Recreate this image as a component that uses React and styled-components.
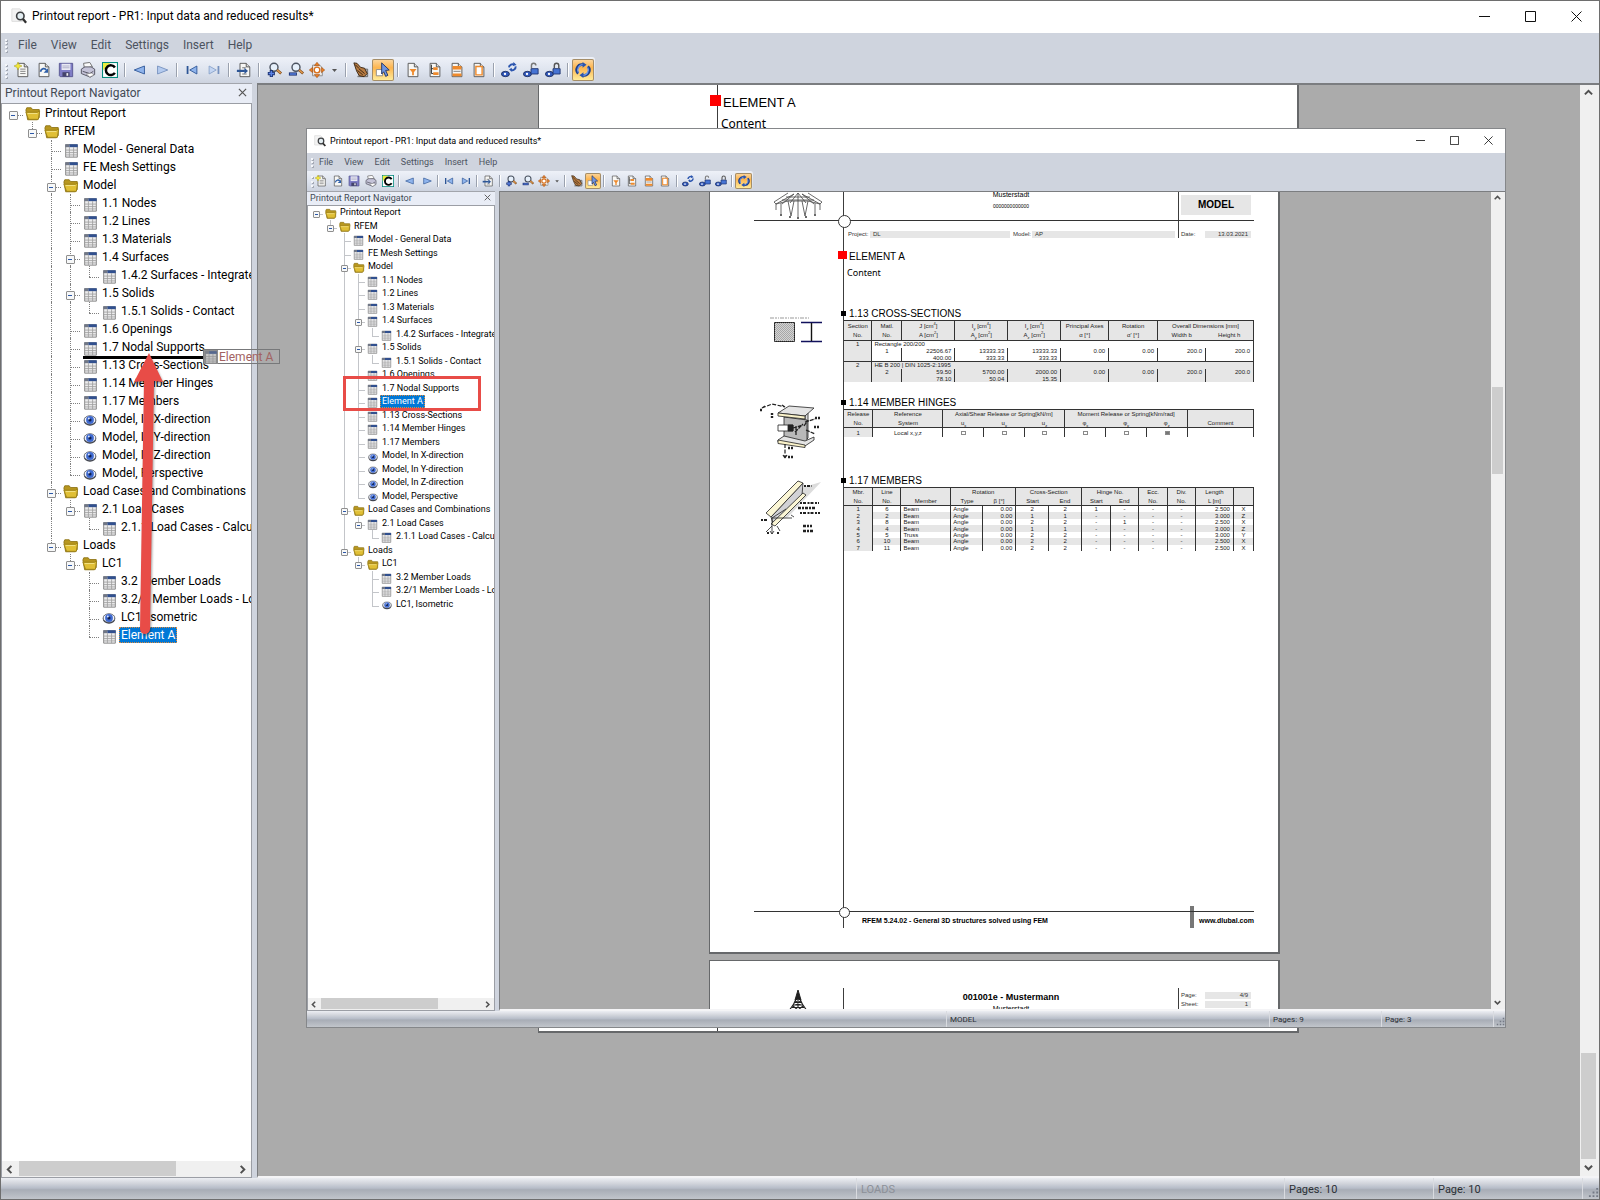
import React from "react";
import styled, { createGlobalStyle, css, ThemeProvider, useTheme } from "styled-components";

/* ---------- themes: the full window and the compact one ---------- */

const full = {
  compact: false, font: 12, status: 11, title: 32, titlePad: 10, titleGap: 5, titleIcon: 16, caption: 46,
  menu: 24, menuGap: 14, menuPad: 18, tools: 26, toolsWidth: 594, toolIcon: 18, trayPad: 11,
  head: 20, nav: 256, splitter: 5, tree: 540, indent: 19, mid: 9, treePad: 2, slot: 20, mark: 9, glyph: 16,
  bar: 17, foot: 21, footCells: [428, 149, 149, 17], sheet: 761, rim: 2,
};
const compact = {
  compact: true, font: 9, status: 8, title: 24, titlePad: 7, titleGap: 4, titleIcon: 12, caption: 34,
  menu: 18, menuGap: 11, menuPad: 13, tools: 20, toolsWidth: 446, toolIcon: 14, trayPad: 7,
  head: 14, nav: 192, splitter: 4, tree: 405, indent: 14, mid: 7, treePad: 1, slot: 15, mark: 7, glyph: 12,
  bar: 13, foot: 16, footCells: [323, 112, 112, 12], sheet: 571, rim: 1,
};

const Global = createGlobalStyle`
  * { box-sizing: border-box; }
  body { margin: 0; background: #ababab; font-family: Roboto, "Noto Sans", sans-serif; }
  button { margin: 0; padding: 0; border: 0; background: none; font: inherit; color: inherit; }
  svg { display: block; flex: none; }
`;

/* ---------- window frame ---------- */

const Frame = styled.section`
  display: flex;
  flex-direction: column;
  height: 100%;
  border: 1px solid ${(p) => (p.theme.compact ? "#85878a" : "#6e6e6e")};
  background: #cfd4de;
  color: #000;
  font-size: ${(p) => p.theme.font}px;
  overflow: hidden;
`;
const TitleBar = styled.header`
  display: flex;
  align-items: center;
  flex: none;
  height: ${(p) => p.theme.title}px;
  padding: 0 0 ${(p) => p.theme.rim}px ${(p) => p.theme.titlePad}px;
  background: #fff;
`;
const Title = styled.h1`
  flex: 1;
  margin: 0;
  padding-left: ${(p) => p.theme.titleGap}px;
  font-size: inherit;
  font-weight: 400;
`;
const CaptionButton = styled.button`
  display: flex;
  justify-content: center;
  width: ${(p) => p.theme.caption}px;
`;
const grip = css`
  &::before {
    content: "";
    position: absolute;
    left: 4px;
    top: 25%;
    bottom: 20%;
    border-left: 2px dotted #f4f6fa;
    filter: drop-shadow(1px 1px 0 #a4a9b4);
  }
`;
const MenuBar = styled.nav`
  display: flex;
  align-items: center;
  gap: ${(p) => p.theme.menuGap}px;
  flex: none;
  position: relative;
  height: ${(p) => p.theme.menu}px;
  padding-left: ${(p) => p.theme.menuPad - 1}px;
  color: #4c535e;
  ${grip}
`;
const ToolRow = styled.div`
  flex: none;
  height: ${(p) => p.theme.tools}px;
`;
const Tray = styled.div`
  position: relative;
  display: flex;
  align-items: center;
  width: ${(p) => p.theme.toolsWidth}px;
  height: 100%;
  padding: 0 1px 0 ${(p) => p.theme.trayPad - 1}px;
  border-radius: 0 3px 3px 0;
  background: linear-gradient(#eef1f8, #dde3ee 55%, #cdd3df);
  ${grip}
`;
const Tool = styled.button`
  display: flex;
  align-items: center;
  justify-content: center;
  gap: 1px;
  flex: ${(p) => (p.$wide ? 35 : 22)} 1 0;
  min-width: 0;
  height: calc(100% - 4px);
  border-radius: 2px;
  ${(p) => p.$on && css`
    background: linear-gradient(#fcd9a4, #fdb54f 40%, #fff0a0);
    box-shadow: inset 0 0 0 1px #a48d68;
  `}
`;
const ToolSeparator = styled.span`
  flex: 8 1 0;
  height: 56%;
  background: linear-gradient(90deg, #9aa1ae 1px, #fff 1px 2px, transparent 2px) 50% 0 / 2px 100% no-repeat;
`;
const Workspace = styled.div`
  display: flex;
  flex: 1;
  min-height: 0;
`;

/* ---------- navigator ---------- */

const Navigator = styled.aside`
  display: flex;
  flex-direction: column;
  flex: none;
  width: ${(p) => p.theme.nav}px;
  padding-right: ${(p) => p.theme.splitter}px;
`;
const PanelHead = styled.div`
  display: flex;
  align-items: center;
  justify-content: space-between;
  flex: none;
  height: ${(p) => p.theme.head}px;
  padding: 0 ${(p) => (p.theme.compact ? 4 : 5)}px 2px ${(p) => (p.theme.compact ? 3 : 4)}px;
  border-top: 1px solid #a2a5ac;
  background: #e9edf6;
  color: #434a55;
`;
const PanelTitle = styled.h2`
  margin: 0;
  font-size: inherit;
  font-weight: 400;
`;
const TreeBox = styled.div`
  display: flex;
  flex-direction: column;
  justify-content: space-between;
  flex: 1;
  min-height: 0;
  border: 1px solid #9b9ea5;
  background: #fff;
`;
const Tree = styled.div`
  display: grid;
  grid-auto-rows: minmax(0, 1fr);
  height: ${(p) => p.theme.tree}px;
  padding-left: ${(p) => p.theme.treePad}px;
  overflow: hidden;
`;
const TreeRow = styled.div`
  display: flex;
  align-items: stretch;
  white-space: nowrap;
`;
const lineStyle = (p) => (p.theme.compact ? "1px solid #c3c5c9" : "1px dotted #808080");
const Guide = styled.span`
  position: relative;
  flex: none;
  width: ${(p) => p.theme.indent}px;
  &::before {
    content: "";
    position: absolute;
    left: ${(p) => p.theme.mid}px;
    top: 0;
    bottom: ${(p) => (p.$stop ? "38%" : "0")};
    border-left: ${(p) => (p.$line ? lineStyle(p) : "0")};
  }
  &::after {
    content: "";
    position: absolute;
    left: ${(p) => p.theme.mid}px;
    right: 0;
    top: 61%;
    border-top: ${(p) => (p.$elbow ? lineStyle(p) : "0")};
  }
`;
const Expander = styled.button`
  position: absolute;
  z-index: 1;
  left: ${(p) => p.theme.mid}px;
  top: 61%;
  width: ${(p) => p.theme.mark}px;
  height: ${(p) => p.theme.mark}px;
  margin: ${(p) => -(p.theme.mark - 1) / 2}px;
  border: 1px solid #8f8f8f;
  border-radius: 1px;
  background: linear-gradient(#2c58a8, #2c58a8) 50% 50% / 60% 1px no-repeat, #f7f8f8;
`;
const Slot = styled.span`
  display: flex;
  align-items: center;
  justify-content: center;
  flex: none;
  width: ${(p) => p.theme.slot}px;
  padding-top: 2px;
`;
const Label = styled.span`
  align-self: center;
  padding: 0 2px;
  line-height: ${(p) => (p.theme.compact ? 13 : 16)}px;
  ${(p) => p.$selected && css`
    background: #0078d7;
    color: #fff;
    outline: 1px dotted #e08a3c;
    outline-offset: -1px;
  `}
`;

/* ---------- scroll bars ---------- */

const HBar = styled.div`
  display: flex;
  flex: none;
  height: ${(p) => p.theme.bar - 1}px;
  background: #f0f0f0;
`;
const VBar = styled.div`
  display: flex;
  flex-direction: column;
  flex: none;
  width: ${(p) => p.theme.bar}px;
  background: #f0f0f0;
`;
const Arrow = styled.button`
  display: flex;
  align-items: center;
  justify-content: center;
  flex: none;
  width: ${(p) => p.theme.bar}px;
  height: ${(p) => (p.$v ? p.theme.bar : p.theme.bar - 1)}px;
`;
const Track = styled.div`
  display: flex;
  flex-direction: ${(p) => (p.$v ? "column" : "row")};
  flex: 1;
  padding: ${(p) => (p.$v ? "0 1px" : "0 0 1px")};
`;
const Gap = styled.span`flex: ${(p) => p.$grow} 1 0;`;
const Thumb = styled.span`
  flex: ${(p) => p.$grow} 1 0;
  background: #cdcdcd;
`;

/* ---------- preview area and status bar ---------- */

const Preview = styled.main`
  display: flex;
  flex: 1;
  min-width: 0;
  border: solid #7b7d80;
  border-width: ${(p) => p.theme.rim}px 0 0 1px;
  border-bottom: 2px solid #f4f4f6;
  padding-right: ${(p) => p.theme.rim}px;
  background: #f0f0f0;
`;
const Desk = styled.div`
  display: flex;
  flex-direction: column;
  align-items: center;
  gap: 6px;
  flex: 1;
  min-width: 0;
  padding-right: ${(p) => (p.theme.compact ? 2 : 1)}px;
  overflow: hidden;
  background: #ababab;
`;
const StatusBar = styled.footer`
  display: flex;
  align-items: stretch;
  flex: none;
  height: ${(p) => p.theme.foot}px;
  font-size: ${(p) => p.theme.status}px;
  color: #2c3036;
  background: linear-gradient(#eceef3, #d2d5dc 25%, #b7bdc9 48%, #a8adb6 56%, #c1c5cb);
`;
const StatusCell = styled.span`
  display: flex;
  align-items: center;
  width: ${(p) => p.$w}px;
  flex: ${(p) => (p.$w ? "none" : 1)};
  padding: ${(p) => p.theme.rim}px 0 0 ${(p) => (p.theme.compact ? 3 : 4)}px;
  border-left: 1px solid ${(p) => (p.$first ? "transparent" : "#d9dbe0")};
  color: ${(p) => (p.$dim ? "#8c9098" : "inherit")};
`;
const GripCell = styled(StatusCell)`
  align-items: flex-end;
  justify-content: flex-end;
  padding: 0 0 1px;
`;

/* ---------- report sheets ---------- */

const Sheet = styled.article`
  display: flex;
  flex-direction: column;
  flex: none;
  width: ${(p) => p.theme.sheet}px;
  height: ${(p) => p.$h}px;
  border: solid #66686a;
  border-width: ${(p) => (p.$top ? 1 : 0)}px 2px 2px 1px;
  padding-top: ${(p) => (p.$top ? 27 : 0)}px;
  background: #fff;
  font-family: "Liberation Sans", Arial, sans-serif;
`;
const Band = styled.div`
  display: grid;
  grid-template-columns: ${(p) => (p.theme.compact ? 133 : 178)}px 1fr;
  flex: ${(p) => (p.$fill ? 1 : "none")};
  min-height: ${(p) => p.$h || 0}px;
`;
const Margin = styled.div`
  display: flex;
  align-items: flex-start;
  justify-content: flex-end;
  padding: ${(p) => p.$pad || 0}px ${(p) => p.$right || 19}px 0 0;
`;
const Column = styled.div`
  border-left: 1px solid #3c3c3c;
  padding-right: 24px;
  padding-bottom: ${(p) => p.$gap || 0}px;
`;
const Heading = styled.h3`
  position: relative;
  margin: ${(p) => p.$top || 0}px 0 0;
  padding-left: 5px;
  font-size: ${(p) => (p.theme.compact ? 10 : 13)}px;
  line-height: ${(p) => (p.theme.compact ? 12 : 16)}px;
  font-weight: 400;
  white-space: nowrap;
  &::before {
    content: "";
    position: absolute;
    left: ${(p) => (p.$red ? (p.theme.compact ? -6 : -8) : -3)}px;
    top: ${(p) => (p.$red ? 0 : 3)}px;
    width: ${(p) => (p.$red ? (p.theme.compact ? 9 : 11) : 5)}px;
    height: ${(p) => (p.$red ? (p.theme.compact ? 8 : 11) : 5)}px;
    background: ${(p) => (p.$red ? "#f00" : "#000")};
  }
`;
const Content = styled.p`
  margin: ${(p) => (p.theme.compact ? 4 : 5)}px 0 0;
  padding-left: 3px;
  font-family: "Noto Sans", sans-serif;
  font-size: ${(p) => (p.theme.compact ? 9 : 12)}px;
  line-height: ${(p) => (p.theme.compact ? 12 : 16)}px;
`;
const HeadColumn = styled.div`
  display: grid;
  grid-template-columns: 1fr 76px;
  border-left: 1px solid #3c3c3c;
  padding-right: 24px;
`;
const Owner = styled.div`
  text-align: center;
  font-size: ${(p) => (p.$small ? 5 : 7)}px;
  line-height: ${(p) => (p.$small ? 18 : 5)}px;
`;
const OwnerName = styled.div`
  text-align: center;
  font-size: 9px;
  font-weight: 700;
  line-height: 18px;
`;
const HeadSide = styled.div`
  display: flex;
  flex-direction: column;
  gap: ${(p) => p.$gap}px;
  border-left: 1px solid #3c3c3c;
  padding: ${(p) => p.$pad || 0}px 3px 0 2px;
`;
const Part = styled.div`
  padding: 4px 0;
  background: #e6e6e6;
  font-size: 10px;
  font-weight: 700;
  line-height: 12px;
  text-align: center;
`;
const Field = styled.div`
  display: flex;
  align-items: center;
  flex: ${(p) => p.$grow || "none"};
  height: 7px;
  font-size: 6px;
  line-height: 7px;
  color: #333;
`;
const FieldName = styled.span`width: ${(p) => p.$w}px;`;
const FieldValue = styled.span`
  flex: 1;
  padding: 0 3px;
  background: #e6e6e6;
  text-align: ${(p) => (p.$right ? "right" : "left")};
`;
const FieldRow = styled.div`
  display: flex;
  gap: 3px;
  padding: 10px 3px 0 4px;
`;
const Rule = styled.div`
  position: relative;
  z-index: 1;
  flex: none;
  height: 1px;
  margin: 0 24px 0 44px;
  background: #333;
  &::before {
    content: "";
    position: absolute;
    left: ${(p) => 89 - p.$r}px;
    top: ${(p) => -p.$r}px;
    width: ${(p) => 2 * p.$r + 1}px;
    height: ${(p) => 2 * p.$r + 1}px;
    border: 1px solid #333;
    border-radius: 50%;
    background: #fff;
  }
`;
const Imprint = styled.div`
  position: relative;
  display: flex;
  align-items: center;
  justify-content: space-between;
  height: 16px;
  margin: 0 24px 24px 0;
  padding-left: 18px;
  border-left: 1px solid #3c3c3c;
  font-size: 7px;
  font-weight: 700;
  &::after {
    content: "";
    position: absolute;
    right: 60px;
    top: -6px;
    width: 4px;
    height: 22px;
    background: #777;
  }
`;

const Grid = styled.table`
  table-layout: fixed;
  width: 100%;
  height: ${(p) => p.$h}px;
  border-collapse: collapse;
  border-right: 1px solid #333;
  font-size: 6px;
  line-height: 6px;
  color: #222;
  th { font-weight: 400; background: #e6e6e6; padding: 0; white-space: nowrap; border-left: 1px solid #333; }
  th:first-child, td:first-child { border-left: 0; }
  td { padding: 0 3px; border-left: 1px solid #333; white-space: nowrap; text-align: center; }
  tr > td:first-child { background: #e6e6e6; }
  thead { border-top: 1px solid #333; border-bottom: 1px solid #333; }
  thead tr { height: ${(p) => p.$head}px; }
  sub, sup { font-size: 4px; line-height: 0; }
`;
const Row = styled.tr`
  background: ${(p) => (p.$alt ? "#e6e6e6" : "#fff")};
  border-top: ${(p) => (p.$rule ? "1px solid #333" : "0")};
`;
const Th = styled.th`&&& { ${(p) => p.$open && "border-left: 0;"} }`;
const Num = styled.td`&&& { text-align: right; }`;
const Txt = styled.td`&&& { text-align: left; padding-left: 2px; }`;
const Tick = styled.input`
  appearance: none;
  display: block;
  width: 5px;
  height: 4px;
  margin: 0 auto;
  border: 1px solid #8a8a8a;
  background: #fff;
  &:checked { background: #777; }
`;

/* ---------- overlays ---------- */

const Stage = styled.div`
  position: relative;
  height: 100vh;
  overflow: hidden;
`;
const Floating = styled.div`
  position: absolute;
  left: 306px;
  top: 128px;
  width: 1200px;
  height: 900px;
`;
const Callout = styled.div`
  position: absolute;
  left: 343px;
  top: 376px;
  width: 138px;
  height: 35px;
  border: 3px solid #e84c47;
`;
const DropLine = styled.div`
  position: absolute;
  left: 83px;
  top: 356px;
  width: 122px;
  height: 3px;
  background: #000;
`;
const Ghost = styled.div`
  position: absolute;
  left: 203px;
  top: 349px;
  display: flex;
  align-items: center;
  gap: 1px;
  width: 77px;
  height: 15px;
  border: 1px solid #77787a;
  font-size: 12px;
  color: #a26262;
`;
const GhostIcon = styled.span`
  background: #8e8e8e;
  span { display: block; opacity: 0.6; }
`;
const DragArrow = styled.svg`
  position: absolute;
  left: 130px;
  top: 350px;
  filter: drop-shadow(1px 2px 1px rgba(0, 0, 0, 0.35));
`;

/* ---------- drawings ---------- */

const Ic = ({ s, children, ...r }) => (
  <svg width={s} height={s} viewBox="0 0 18 18" fill="none" aria-hidden="true" {...r}>{children}</svg>
);
const Paper = ({ x = 0 }) => (
  <g>
    <path d={`M${3.5 + x} 1.5h7l4 4v11h-11z`} fill="#f7f7f5" stroke="#4f4f4f" />
    <path d={`M${10.5 + x} 1.5v4h4`} fill="#ddd" stroke="#4f4f4f" />
  </g>
);
const Lens = () => (
  <g>
    <circle cx="9" cy="6" r="4.5" fill="#e6f0fb" stroke="#4b5360" strokeWidth="1.6" />
    <path d="M12.5 9l4.500 4" stroke="#7a4a1c" strokeWidth="3" />
    <path d="M12.500 9l4 3.500" stroke="#e39a4e" strokeWidth="1.600" />
  </g>
);
const BlueEye = () => (
  <g>
    <ellipse cx="5" cy="13.500" rx="4.500" ry="3" fill="#3159bd" stroke="#1b2c5c" />
    <circle cx="4.500" cy="13.500" r="1.300" fill="#fff" />
  </g>
);
const drawings = {
  report: <><path d="M1 1h9l3 3v11H1z" fill="#f3f3f3" stroke="#dadada" /><circle cx="10.500" cy="9" r="4.200" fill="#e4eef2" stroke="#3d3f42" strokeWidth="1.800" /><path d="M13.500 12.500L17 16.500" stroke="#2f2f2f" strokeWidth="2.600" /></>,
  new: <><Paper x={1} /><path d="M7 8h6M7 10.500h6M7 13h6" stroke="#777" /><path d="M4.500 0l1.200 3L9 4.500 5.800 6 4.500 9 3.300 6 0 4.500 3.300 3z" fill="#f5e93a" stroke="#a39a1d" strokeWidth=".6" /></>,
  open: <><Paper /><path d="M5 11c1-4 5-4.500 6.500-2" stroke="#2f5fa8" strokeWidth="2" /><path d="M13.500 7v5h-5z" fill="#2f5fa8" /></>,
  save: <><path d="M1.500 1.500h15v15h-14l-1-1z" fill="#7f7dc6" stroke="#55548e" /><path d="M4 2h10v7H4z" fill="#e9e9f4" /><path d="M5 4.500h8M5 6.500h8" stroke="#a9a9c4" /><path d="M5 11.500h8v5H5z" fill="#43436b" /><path d="M9.500 12.500h2v3h-2z" fill="#eee" /></>,
  print: <><path d="M5 7L4 1.500l7-1 3 5z" fill="#fafafa" stroke="#666" /><path d="M1.500 8l4-2.500h7L16.500 8v6l-5 3-10-4z" fill="#c4c3d8" stroke="#4b4b58" /><path d="M3 10.500l8 2.500 4-2.500" stroke="#4b4b58" /><path d="M7 13.500l6-1 3 2-5 2.500z" fill="#fff" stroke="#777" strokeWidth=".7" /></>,
  company: <><path d="M0 0h18v18H0z" fill="#068b7e" /><path d="M1.200 1.200h15.600v15.600H1.200z" fill="#fff" /><path d="M1.200 1.200h8l-8 8z" fill="#e9ee3d" /><path d="M14.500 6.200A5.500 5.500 0 1 0 14.500 12.300" stroke="#000" strokeWidth="2.800" /></>,
  prev: <path d="M2.500 9L14 4.500v9z" fill="#8fb4ec" stroke="#2c5596" />,
  next: <path d="M15.500 9L4 4.500v9z" fill="#b4cbef" stroke="#7590bd" />,
  nextStrong: <path d="M15.500 9L4 4.500v9z" fill="#8fb4ec" stroke="#2c5596" />,
  first: <><path d="M4 4.500v9" stroke="#2c5596" strokeWidth="2" /><path d="M6.500 9L14.500 4.500v9z" fill="#8fb4ec" stroke="#2c5596" /></>,
  last: <><path d="M14 4.500v9" stroke="#7590bd" strokeWidth="2" /><path d="M11.500 9L3.500 4.500v9z" fill="#c3d5f2" stroke="#8aa2ca" /></>,
  lastStrong: <><path d="M14 4.500v9" stroke="#2c5596" strokeWidth="2" /><path d="M11.500 9L3.500 4.500v9z" fill="#8fb4ec" stroke="#2c5596" /></>,
  goto: <><Paper x={1} /><path d="M7 6.500h4M7 13.500h5" stroke="#666" /><path d="M1 10h9" stroke="#2c5596" strokeWidth="2.500" /><path d="M9.500 6.500L13.500 10l-4 3.500z" fill="#2c5596" /></>,
  zoomIn: <><Lens /><path d="M6 9v8M2 13h8" stroke="#1b3170" strokeWidth="3.600" /><path d="M6 10v6M3 13h6" stroke="#5b83e6" strokeWidth="1.600" /></>,
  zoomOut: <><Lens /><path d="M1 13.500h9" stroke="#1b3170" strokeWidth="3.600" /><path d="M2 13.500h7" stroke="#5b83e6" strokeWidth="1.600" /></>,
  fit: <><path d="M4 3.500h8l3 3v9H4z" fill="#ececec" stroke="#888" /><path d="M9 .3l3 3.700H6zM9 17.700l3-3.700H6zM.3 9L4 6v6zM17.700 9L14 6v6z" fill="#ea7d22" stroke="#9a4a0c" strokeWidth=".6" /><circle cx="9" cy="9" r="3.200" fill="#fff" stroke="#d9701b" strokeWidth="1.600" /></>,
  hand: <><path d="M8 8h8.500v8.500H5" fill="#b5b5b5" stroke="#666" /><path d="M1 1l3.500.5 4 4.500 4.500 1 3 6-3.500 3.500-5.500-1-3-5.500z" fill="#b87c42" stroke="#33210f" /><path d="M5 9.500l6 5M6.500 7.500l6.500 5.500M2.500 3l4 4" stroke="#33210f" /></>,
  pick: <><path d="M1.500 8.500h7v7h-7z" fill="#fff" stroke="#888" /><path d="M7.500 1l8.500 8-4 .5 2.500 5.500-2.500 1.200L9.800 11 7.500 13.500z" fill="#6f95e0" stroke="#1f3160" /></>,
  filter: <><Paper /><path d="M5 8h8l-3 3.500V15H8v-3.500z" fill="#ef8a2c" /></>,
  structure: <><Paper /><path d="M7 6h5v3H7zM7 11.500h6v3H7z" fill="#ef8a2c" /><path d="M5 3v10h2M5 7.500h2" stroke="#222" /></>,
  headings: <><Paper /><path d="M4 4.500h10v4H4zM4 13h10v3H4z" fill="#ef8a2c" /><path d="M5 10.500h8" stroke="#777" /></>,
  borders: <><Paper /><path d="M5.500 5h7v9.500h-7z" fill="#fff" stroke="#ef8a2c" strokeWidth="1.600" /></>,
  viewSync: <><BlueEye /><path d="M9 6a4 4 0 0 1 6-3M16.500 5a4 4 0 0 1-5.500 4" stroke="#2b55ae" strokeWidth="2.200" /><path d="M14 0l3.500 3.500-4 1zM12.500 11L9 8.500l3-2z" fill="#2b55ae" /></>,
  viewOpen: <><BlueEye /><path d="M9 7.500h8v6H9z" fill="#4674d4" stroke="#1d326c" /><path d="M9.500 7V4a2.500 2.500 0 0 1 5 0" stroke="#777" strokeWidth="1.600" /></>,
  viewLock: <><BlueEye /><path d="M9 7.500h8v6H9z" fill="#4674d4" stroke="#1d326c" /><path d="M10.500 7V4a2.500 2.500 0 0 1 5 0v3" stroke="#555" strokeWidth="1.600" /></>,
  refresh: <><path d="M3.500 13A6 6 0 0 1 9 3M14.500 5A6 6 0 0 1 9 15" stroke="#1d3f8c" strokeWidth="3" /><path d="M3.800 12A6 6 0 0 1 9 3M14.200 6A6 6 0 0 1 9 15" stroke="#6d98ee" strokeWidth="1.400" /><path d="M8.500 0L13 3 8.500 6.500zM9.500 11.500L5 15l4.500 3z" fill="#2b55ae" /></>,
};
const treeDrawings = {
  folder: <><path d="M1 4.500L2 2h5l1.500 2H16v9l-2 2.500H3z" fill="#b8971f" stroke="#8d7316" /><path d="M1 7h13l2.500-1.500L15 15H4z" fill="#e0bf35" stroke="#9a7f19" /><path d="M3 8.500h11" stroke="#f6e68e" /></>,
  sheet: <><path d="M2 2h14v15H2z" fill="#ededee" stroke="#767676" /><path d="M1.500 1.500h5v3.500h-5z" fill="#707786" /><path d="M6.500 1.500h10V5h-10z" fill="#31508f" /><path d="M2 8.500h14M2 11.500h14M2 14.300h14M6.500 5v12M11.500 5v12" stroke="#9f9f9f" /></>,
  eye: <><ellipse cx="9" cy="10" rx="8" ry="6.500" fill="#3a3e48" /><ellipse cx="9" cy="9" rx="7.500" ry="5.500" fill="#f2f4f8" stroke="#5a5f6b" /><circle cx="9" cy="9" r="5" fill="#3f6ad0" /><circle cx="9" cy="9" r="2" fill="#10204d" /><circle cx="7.500" cy="7" r="1.200" fill="#d7e4ff" /></>,
};

const Logo = () => (
  <svg width="52" height="28" viewBox="0 0 52 28" fill="none" stroke="#444" strokeWidth=".8" aria-hidden="true">
    <path d="M22 2L4 12 2 10 16 1M30 2l18 10 2-2L36 1M4 12l12-3h20l12 3M10 8h32M14 5h24M22 2L10 12M26 1L18 11M26 1l8 10M30 2l12 10M26 1v24M16 9l3 15M36 9l-3 15M9 11v11M43 11v11M4 12v6M48 12v6M22 9l-3 15M30 9l3 15" />
    <path d="M18 24v2M26 25v2M34 24v2M9 22v2M43 22v2" strokeWidth="1.600" />
  </svg>
);
const Tower = () => (
  <svg width="24" height="24" viewBox="0 0 24 24" fill="none" stroke="#222" aria-hidden="true">
    <path d="M12 0l-3 10 3-1 3 1z" fill="#222" />
    <path d="M10 9Q8 15 1 23M14 9q2 6 9 14M12 9v9M8 12.500h8M7 15h10M6 17.500h12M7 16l5 4 5-4M4 19.500l8 1 8-1M2 22h20M9.500 11l5 4M14.500 11l-5 4" strokeWidth="1.100" />
  </svg>
);
const SectionsArt = () => (
  <svg width="54" height="28" viewBox="0 0 54 28" aria-hidden="true">
    <defs><pattern id="hatch" width="2" height="2" patternUnits="userSpaceOnUse"><path d="M0 0l2 2" stroke="#888" strokeWidth=".6" /></pattern></defs>
    <path d="M0 2h40" stroke="#999" strokeDasharray="4 1 2 1 1 1" strokeWidth="1.200" />
    <path d="M4.500 6.500h20v19h-20z" fill="#d4d4d4" stroke="#222" />
    <path d="M4.500 6.500h20v19h-20z" fill="url(#hatch)" />
    <path d="M31 6.500h21M31 25.500h21" stroke="#11115c" strokeWidth="1.600" />
    <path d="M41.500 7v18" stroke="#111" strokeWidth="1.400" />
  </svg>
);
const HingeArt = () => (
  <svg width="64" height="58" viewBox="0 0 64 58" fill="none" stroke="#222" strokeWidth=".8" aria-hidden="true">
    <path d="M45 14l3-3v25l-3 3z" fill="#ddd" />
    <path d="M24 15l23 3v22l-23-3z" fill="#b9b9b9" />
    <path d="M18 11l11-7 25 2-9 8z" fill="#e4e4e4" /><path d="M18 11l27 3v3l-27-3z" fill="#faf2c9" />
    <path d="M18 38l6-4 21 5 9-4v3l-9 6-27-4z" fill="#e4e4e4" /><path d="M18 38l27 5v2.500l-27-4z" fill="#faf2c9" />
    <path d="M18 23h15v6H18z" fill="#fff" /><path d="M28 23h5v6h-5z" fill="#222" />
    <path d="M33 26l10-3M35 30l8-8M36 24v9M45 20l10-3M46 28l9 4M44 24l4-6" strokeWidth="1.300" strokeDasharray="4 1" />
    <path d="M2 6l10-4 13 3M2 6l3-2M25 5l-3-2M25 42v14M25 56l-2-3M25 56l2-3" strokeDasharray="4 1.500" strokeWidth="1.200" />
    <path d="M0 8h3M12 11v6M55 16h6M54 25h5M28 46h5M28 55h5" strokeWidth="2.400" strokeDasharray="2 1" />
  </svg>
);
const MemberArt = () => (
  <svg width="64" height="56" viewBox="0 0 64 56" fill="none" stroke="#222" strokeWidth=".8" aria-hidden="true">
    <path d="M44 8L61 3 28 38 14 44z" fill="#dcdcdc" stroke="none" />
    <path d="M11 38L43 4l-1 12-29 28z" fill="#d2d2d6" />
    <path d="M6 34L38 2l5 2-32 34z" fill="#fbf6d5" />
    <path d="M11 45L43 14l3 2-31 31z" fill="#fbf6d5" />
    <path d="M12 39v16M12 39h20M12 39l14-9M12 55l-2-3M12 55l2-3M34 38l-3-2M6 53l6-6M20 52l-3-5" />
    <path d="M1 41h6M44 7h8M40 24h19M40 34h20M7 54h2M17 54h3" strokeWidth="2" strokeDasharray="2 1 3 1.500" />
    <path d="M38 29h18M43 47h9M43 52h11" strokeWidth="2.600" strokeDasharray="3 1 2 1" />
  </svg>
);

/* ---------- parts ---------- */

const menus = ["File", "View", "Edit", "Settings", "Insert", "Help"];
const tools = (strong) => [
  ["new"], ["open"], ["save"], ["print"], ["company"], null, ["prev"], [strong ? "nextStrong" : "next"], null,
  ["first"], [strong ? "lastStrong" : "last"], null, ["goto"], null, ["zoomIn"], ["zoomOut"], ["fit", "wide"], null,
  ["hand"], ["pick", "on"], null, ["filter"], ["structure"], ["headings"], ["borders"], null,
  ["viewSync"], ["viewOpen"], ["viewLock"], null, ["refresh", "on"],
];

const chevrons = { left: "M6 1L2 5l4 4", right: "M3 1l4 4-4 4", up: "M1 6l4-4 4 4", down: "M1 3l4 4 4-4" };
const Chevron = ({ to }) => {
  const t = useTheme();
  const s = t.compact ? 7 : 9;
  return <svg width={s} height={s} viewBox="0 0 10 10" fill="none" stroke="#505050" strokeWidth="2.200"><path d={chevrons[to]} /></svg>;
};

function Scroll({ vertical, before, thumb, after }) {
  const Bar = vertical ? VBar : HBar;
  return (
    <Bar>
      <Arrow $v={vertical} aria-label="Scroll back"><Chevron to={vertical ? "up" : "left"} /></Arrow>
      <Track $v={vertical}><Gap $grow={before} /><Thumb $grow={thumb} /><Gap $grow={after} /></Track>
      <Arrow $v={vertical} aria-label="Scroll forward"><Chevron to={vertical ? "down" : "right"} /></Arrow>
    </Bar>
  );
}

const n = (label, kind = "sheet", children, selected) => ({ label, kind, children, selected });
const buildTree = (moved) => {
  const element = n("Element A", "sheet", undefined, true);
  return n("Printout Report", "folder", [n("RFEM", "folder", [
    n("Model - General Data"),
    n("FE Mesh Settings"),
    n("Model", "folder", [
      n("1.1 Nodes"), n("1.2 Lines"), n("1.3 Materials"),
      n("1.4 Surfaces", "sheet", [n("1.4.2 Surfaces - Integrate")]),
      n("1.5 Solids", "sheet", [n("1.5.1 Solids - Contact")]),
      n("1.6 Openings"), n("1.7 Nodal Supports"), ...(moved ? [element] : []),
      n("1.13 Cross-Sections"), n("1.14 Member Hinges"), n("1.17 Members"),
      n("Model, In X-direction", "eye"), n("Model, In Y-direction", "eye"),
      n("Model, In Z-direction", "eye"), n("Model, Perspective", "eye"),
    ]),
    n("Load Cases and Combinations", "folder", [
      n("2.1 Load Cases", "sheet", [n("2.1.1 Load Cases - Calcul")]),
    ]),
    n("Loads", "folder", [n("LC1", "folder", [
      n("3.2 Member Loads"), n("3.2/1 Member Loads - Lo"), n("LC1, Isometric", "eye"),
      ...(moved ? [] : [element]),
    ])]),
  ])]);
};

function Branch({ node, guides = [], last = true, root = false }) {
  const t = useTheme();
  const size = t.glyph + (node.kind === "folder" ? 0 : node.kind === "eye" ? -2 : -1);
  return (
    <>
      <TreeRow role="treeitem" aria-selected={!!node.selected}>
        {guides.map((line, i) => <Guide key={i} $line={line} />)}
        <Guide $line={!root} $stop={last} $elbow>
          {node.children && <Expander aria-label={"Collapse " + node.label} />}
        </Guide>
        <Slot><Ic s={size}>{treeDrawings[node.kind]}</Ic></Slot>
        <Label $selected={node.selected}>{node.label}</Label>
      </TreeRow>
      {node.children && node.children.map((c, i) => (
        <Branch key={c.label} node={c} guides={[...guides, !last]} last={i === node.children.length - 1} />
      ))}
    </>
  );
}

function ReportWindow({ theme, moved, status, pages, page, scroll, children }) {
  const glyph = theme.compact ? 9 : 11;
  return (
    <ThemeProvider theme={theme}>
      <Frame>
        <TitleBar>
          <Ic s={theme.titleIcon}>{drawings.report}</Ic>
          <Title>Printout report - PR1: Input data and reduced results*</Title>
          {[["Minimize", "M0 5.500h11"], ["Maximize", "M.5.5h10v10H.5z"], ["Close", "M.5.5l10 10M10.500.5l-10 10"]].map(([name, d]) => (
            <CaptionButton key={name} aria-label={name}>
              <svg width={glyph} height={glyph} viewBox="0 0 11 11" fill="none" stroke="#111"><path d={d} /></svg>
            </CaptionButton>
          ))}
        </TitleBar>
        <MenuBar>
          {menus.map((m) => <button key={m}>{m}</button>)}
        </MenuBar>
        <ToolRow>
          <Tray role="toolbar">
            {tools(theme.compact).map((tool, i) => tool ? (
              <Tool key={i} aria-label={tool[0]} $on={tool[1] === "on"} $wide={tool[1] === "wide"}>
                <Ic s={theme.toolIcon - 2}>{drawings[tool[0]]}</Ic>
                {tool[1] === "wide" && <Ic s={theme.toolIcon - 4} viewBox="0 0 14 14"><path d="M6 6h5L8.500 9z" fill="#555" /></Ic>}
              </Tool>
            ) : <ToolSeparator key={i} />)}
          </Tray>
        </ToolRow>
        <Workspace>
          <Navigator>
            <PanelHead>
              <PanelTitle>Printout Report Navigator</PanelTitle>
              <button aria-label="Close navigator">
                <svg width={glyph - 2} height={glyph - 2} viewBox="0 0 10 10" stroke="#555" strokeWidth="1.300"><path d="M1 1l8 8M9 1L1 9" /></svg>
              </button>
            </PanelHead>
            <TreeBox>
              <Tree role="tree"><Branch node={buildTree(moved)} root /></Tree>
              <Scroll before={0} thumb={73} after={27} />
            </TreeBox>
          </Navigator>
          <Preview>
            <Desk>{children}</Desk>
            <Scroll vertical {...scroll} />
          </Preview>
        </Workspace>
        <StatusBar>
          <StatusCell $first />
          <StatusCell $w={theme.footCells[0]} $dim={!theme.compact}>{status}</StatusCell>
          <StatusCell $w={theme.footCells[1]}>Pages: {pages}</StatusCell>
          <StatusCell $w={theme.footCells[2]}>Page: {page}</StatusCell>
          <GripCell $w={theme.footCells[3]}>
            <svg width={glyph} height={glyph} viewBox="0 0 12 12" fill="#747a85"><path d="M9 1h2v2H9zM5 5h2v2H5zM9 5h2v2H9zM1 9h2v2H1zM5 9h2v2H5zM9 9h2v2H9z" /></svg>
          </GripCell>
        </StatusBar>
      </Frame>
    </ThemeProvider>
  );
}

/* ---------- report tables ---------- */

const Cols = ({ w }) => <colgroup>{w.map((x, i) => <col key={i} style={{ width: (x / 4.1).toFixed(3) + "%" }} />)}</colgroup>;
const unit = (s, sub, p) => <>{s}{sub && <sub>{sub}</sub>} [cm<sup>{p}</sup>]</>;

const sections = [
  ["1", "Rectangle 200/200", "1", ["22506.67", "400.00"], ["13333.33", "333.33"], ["13333.33", "333.33"]],
  ["2", "HE B 200 | DIN 1025-2:1995", "2", ["59.50", "78.10"], ["5700.00", "50.04"], ["2000.00", "15.35"]],
];
const CrossSections = () => (
  <Grid $h={62} $head={10}>
    <Cols w={[28, 30, 53, 53, 53, 48, 49, 48, 48]} />
    <thead>
      <tr><th>Section</th><th>Matl.</th><th>{unit("J", "", 4)}</th><th>{unit("I", "y", 4)}</th><th>{unit("I", "z", 4)}</th><th>Principal Axes</th><th>Rotation</th><th colSpan={2}>Overall Dimensions [mm]</th></tr>
      <tr><th>No.</th><th>No.</th><th>{unit("A", "", 2)}</th><th>{unit("A", "y", 2)}</th><th>{unit("A", "z", 2)}</th><th>α [°]</th><th>α' [°]</th><th>Width b</th><Th $open>Height h</Th></tr>
    </thead>
    <tbody>
      {sections.map(([no, name, mat, a, b, c], i) => (
        <React.Fragment key={no}>
          <Row $alt={i} $rule={i}><td>{no}</td><Txt colSpan={8}>{name}</Txt></Row>
          <Row $alt={i}><td /><td>{mat}</td><Num>{a[0]}</Num><Num>{b[0]}</Num><Num>{c[0]}</Num><Num>0.00</Num><Num>0.00</Num><Num>200.0</Num><Num>200.0</Num></Row>
          <Row $alt={i}><td /><td /><Num>{a[1]}</Num><Num>{b[1]}</Num><Num>{c[1]}</Num><Num /><Num /><Num /><Num /></Row>
        </React.Fragment>
      ))}
    </tbody>
  </Grid>
);

const releases = [["u", "x"], ["u", "y"], ["u", "z"], ["φ", "x"], ["φ", "y"], ["φ", "z"]];
const Hinges = () => (
  <Grid $h={28} $head={9}>
    <Cols w={[29, 70, 41, 41, 40, 41, 41, 41, 66]} />
    <thead>
      <tr><th>Release</th><th>Reference</th><th colSpan={3}>Axial/Shear Release or Spring[kN/m]</th><th colSpan={3}>Moment Release or Spring[kNm/rad]</th><th /></tr>
      <tr><th>No.</th><th>System</th>{releases.map(([s, x], i) => <Th key={i} $open={i % 3 > 0}>{s}<sub>{x}</sub></Th>)}<th>Comment</th></tr>
    </thead>
    <tbody>
      <Row>
        <td>1</td><td>Local x,y,z</td>
        {releases.map(([s, x], i) => <td key={i}><Tick type="checkbox" aria-label={s + x} defaultChecked={i === 5} /></td>)}
        <td />
      </Row>
    </tbody>
  </Grid>
);

const members = [
  ["1", "6", "Beam", "2", "2", "1", "-", "2.500", "X"],
  ["2", "2", "Beam", "1", "1", "-", "-", "3.000", "Z"],
  ["3", "8", "Beam", "2", "2", "-", "1", "2.500", "X"],
  ["4", "4", "Beam", "1", "1", "-", "-", "3.000", "Z"],
  ["5", "5", "Truss", "2", "2", "-", "-", "3.000", "Y"],
  ["6", "10", "Beam", "2", "2", "-", "-", "2.500", "X"],
  ["7", "11", "Beam", "2", "2", "-", "-", "2.500", "X"],
];
const Members = () => (
  <Grid $h={64} $head={9}>
    <Cols w={[29, 28, 50, 32, 33, 33, 33, 29, 28, 29, 28, 38, 20]} />
    <thead>
      <tr><th>Mbr.</th><th>Line</th><th /><th colSpan={2}>Rotation</th><th colSpan={2}>Cross-Section</th><th colSpan={2}>Hinge No.</th><th>Ecc.</th><th>Div.</th><th>Length</th><th /></tr>
      <tr><th>No.</th><th>No.</th><th>Member</th><th>Type</th><Th $open>β [°]</Th><th>Start</th><Th $open>End</Th><th>Start</th><Th $open>End</Th><th>No.</th><th>No.</th><th>L [m]</th><th /></tr>
    </thead>
    <tbody>
      {members.map(([no, line, kind, s, e, hs, he, len, ax], i) => (
        <Row key={no} $alt={i % 2}>
          <td>{no}</td><td>{line}</td><Txt>{kind}</Txt><Txt>Angle</Txt><Num>0.00</Num><td>{s}</td><td>{e}</td><td>{hs}</td><td>{he}</td><td>-</td><td>-</td><Num>{len}</Num><td>{ax}</td>
        </Row>
      ))}
    </tbody>
  </Grid>
);

const ModelSheets = () => (
  <>
    <Sheet $h={762}>
      <Band $h={28}>
        <Margin><Logo /></Margin>
        <HeadColumn>
          <div><Owner>Musterstadt</Owner><Owner $small>0000000000000</Owner></div>
          <HeadSide $pad={3}><Part>MODEL</Part></HeadSide>
        </HeadColumn>
      </Band>
      <Rule $r={5} />
      <Band $h={17}>
        <Margin />
        <HeadColumn>
          <FieldRow>
            <Field $grow={1}><FieldName $w={22}>Project:</FieldName><FieldValue>DL</FieldValue></Field>
            <Field $grow={1}><FieldName $w={19}>Model:</FieldName><FieldValue>AP</FieldValue></Field>
          </FieldRow>
          <HeadSide $pad={10}><Field><FieldName $w={24}>Date:</FieldName><FieldValue $right>13.03.2021</FieldValue></Field></HeadSide>
        </HeadColumn>
      </Band>
      <Band $h={70}>
        <Margin />
        <Column><Heading $red $top={13}>ELEMENT A</Heading><Content>Content</Content></Column>
      </Band>
      <Band>
        <Margin $pad={8}><SectionsArt /></Margin>
        <Column $gap={15}><Heading>1.13 CROSS-SECTIONS</Heading><CrossSections /></Column>
      </Band>
      <Band>
        <Margin $pad={5}><HingeArt /></Margin>
        <Column $gap={38}><Heading>1.14 MEMBER HINGES</Heading><Hinges /></Column>
      </Band>
      <Band $fill>
        <Margin $pad={4}><MemberArt /></Margin>
        <Column><Heading>1.17 MEMBERS</Heading><Members /></Column>
      </Band>
      <Rule $r={4} />
      <Band>
        <Margin />
        <Imprint><span>RFEM 5.24.02 - General 3D structures solved using FEM</span><span>www.dlubal.com</span></Imprint>
      </Band>
    </Sheet>
    <Sheet $h={762} $top>
      <Band $h={60}>
        <Margin $pad={2} $right={33}><Tower /></Margin>
        <HeadColumn>
          <div><OwnerName>001001e - Mustermann</OwnerName><Owner>Musterstadt</Owner></div>
          <HeadSide $pad={4} $gap={2}>
            <Field><FieldName $w={24}>Page:</FieldName><FieldValue $right>4/9</FieldValue></Field>
            <Field><FieldName $w={24}>Sheet:</FieldName><FieldValue $right>1</FieldValue></Field>
          </HeadSide>
        </HeadColumn>
      </Band>
    </Sheet>
  </>
);

export default function App() {
  return (
    <Stage>
      <Global />
      <ReportWindow theme={full} status="LOADS" pages={10} page={10} scroll={{ before: 90, thumb: 10, after: 0 }}>
        <Sheet $h={948}>
          <Band $fill>
            <Margin />
            <Column><Heading $red $top={10}>ELEMENT A</Heading><Content>Content</Content></Column>
          </Band>
        </Sheet>
      </ReportWindow>
      <DropLine />
      <Ghost><GhostIcon><span><Ic s={14}>{treeDrawings.sheet}</Ic></span></GhostIcon>Element A</Ghost>
      <DragArrow width="40" height="290" viewBox="0 0 40 290" aria-hidden="true">
        <path d="M19 3l14 29-9-1-4 248a5 5 0 0 1-10 0l4-248-10 1z" fill="#e84c47" />
      </DragArrow>
      <Floating>
        <ReportWindow theme={compact} moved status="MODEL" pages={9} page={3} scroll={{ before: 23, thumb: 11, after: 66 }}>
          <ModelSheets />
        </ReportWindow>
      </Floating>
      <Callout />
    </Stage>
  );
}
